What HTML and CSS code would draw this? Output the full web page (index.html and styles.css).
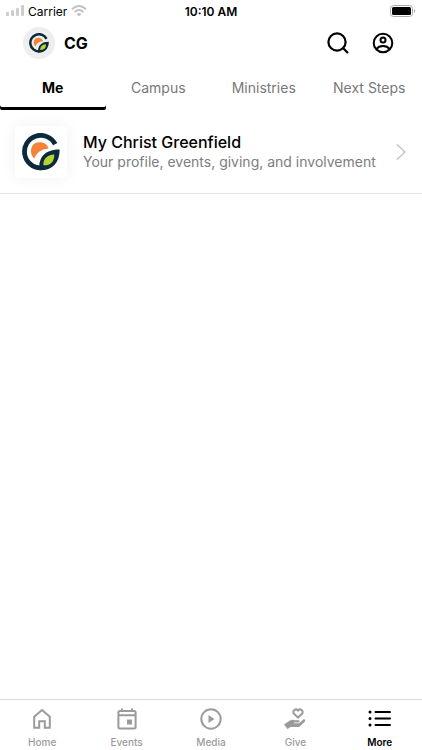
FILE: index.html
```html
<!DOCTYPE html>
<html lang="en">
<head>
<meta charset="utf-8">
<meta name="viewport" content="width=device-width, initial-scale=1">
<title>CG</title>
<link rel="stylesheet" href="styles.css">
</head>
<body>
<svg width="0" height="0" class="defs" aria-hidden="true">
  <symbol id="logo" viewBox="0 0 112 112">
    <path d="M98 33A48 48 0 1 0 56 103" fill="none" stroke="#0b2a3b" stroke-width="14"/>
    <path d="M36 75C20 60 24 27 52 27C66 27 76 35 78 46Q46 49 36 75Z" fill="#f5843a"/>
    <path d="M111 49C111 88 88 111 52 110C46 76 66 48 111 49Z" fill="#0b2a3b"/>
    <path d="M95 63C96 84 84 96 63 95C62 76 73 64 95 63Z" fill="#b4d335"/>
  </symbol>
</svg>
<div class="app">
  <div class="status">
    <div class="carrier">
      <svg width="18" height="12" viewBox="0 0 18 12" fill="#cdcdcd"><rect y="7" width="3" height="4" rx="1"/><rect x="5" y="5" width="3" height="6" rx="1"/><rect x="10" y="3" width="3" height="8" rx="1"/><rect x="15" width="3" height="11" rx="1"/></svg>
      <span>Carrier</span>
      <svg width="16" height="12" viewBox="0 0 16 12" fill="none" stroke="#c2c2c2" stroke-width="2"><path d="M1 4.200Q8-2.200 15 4.200M3.500 7Q8 3 12.500 7"/><path d="M5.500 9Q8 7 10.500 9L8 11.500Z" fill="#c2c2c2" stroke="none"/></svg>
    </div>
    <div class="time">10:10 AM</div>
    <svg class="battery" width="26" height="12" viewBox="0 0 26 12"><rect x=".5" y=".5" width="22" height="11" rx="3" fill="#fff" stroke="#aaa"/><rect x="2" y="2" width="19" height="8" rx="1.500"/><path d="M24 4q2 2 0 4z" fill="#999"/></svg>
  </div>
  <header class="header">
    <span class="avatar"><svg width="20" height="20"><use href="#logo"/></svg></span>
    <h1>CG</h1>
    <button type="button" aria-label="Search"><svg width="24" height="24" viewBox="0 0 24 24" fill="none" stroke="#000" stroke-width="2.200"><circle cx="11" cy="11" r="8.600"/><path d="M17 17l5 5"/></svg></button>
    <button type="button" aria-label="Account"><svg width="24" height="24" viewBox="0 0 24 24" fill="none" stroke="#000" stroke-width="2"><circle cx="12" cy="12" r="9.300"/><circle cx="12" cy="9" r="2.500"/><path d="M5.500 18Q7.500 15 12 15T18.500 18"/></svg></button>
  </header>
  <nav class="tabs" aria-label="Sections">
    <a href="#me" class="active" aria-current="page">Me</a>
    <a href="#campus">Campus</a>
    <a href="#ministries">Ministries</a>
    <a href="#next">Next Steps</a>
  </nav>
  <main>
    <a class="item" href="#profile">
      <span class="thumb"><svg width="38" height="38"><use href="#logo"/></svg></span>
      <span class="copy"><strong>My Christ Greenfield</strong><span>Your profile, events, giving, and involvement</span></span>
      <svg width="10" height="16" viewBox="0 0 10 16" fill="none" stroke="#c4c4c6" stroke-width="1.500"><path d="M1 .5L9 8l-8 7.500"/></svg>
    </a>
  </main>
  <nav class="bottom" aria-label="Main">
    <a href="#home"><svg width="24" height="24" viewBox="0 0 24 24" fill="none" stroke="currentColor" stroke-width="2"><path d="M4.200 20.700V9.700L12 3l7.800 6.700v11h-5v-6.500H9.200v6.500z"/></svg>Home</a>
    <a href="#events"><svg width="24" height="24" viewBox="0 0 24 24" fill="none" stroke="currentColor" stroke-width="2"><rect x="3.400" y="4" width="17.200" height="17.500" rx="1.500"/><path d="M3.400 8.300h17.200M7 1.500V5M17 1.500V5"/><path d="M12 12.500h5v5h-5z" fill="currentColor" stroke="none"/></svg>Events</a>
    <a href="#media"><svg width="24" height="24" viewBox="0 0 24 24" fill="none" stroke="currentColor" stroke-width="2"><circle cx="12" cy="12" r="9.700"/><path d="M9.500 8v8l6-4z" fill="currentColor" stroke="none"/></svg>Media</a>
    <a href="#give"><svg width="24" height="24" viewBox="0 0 24 24" fill="currentColor"><path d="M15 10.500L11 6.700C8.700 4.300 12.500.8 15 3.500C17.500.8 21.300 4.300 19 6.700Z" fill="none" stroke="currentColor" stroke-width="2"/><path d="M1.500 17l5.500-3.500c1.500-1 3-.7 4.500-.3h4c1.500 0 1.500 2 0 2.200h-4.500v.8h5l4-3.500c1.300-1 3 .3 2 1.700l-5 4.800c-.8.700-1.500.8-2.500.8H7.500L4.500 22 1 17.500z"/></svg>Give</a>
    <a href="#more" class="active" aria-current="page"><svg width="24" height="24" viewBox="0 0 24 24" fill="none" stroke="currentColor" stroke-width="2" stroke-linecap="round"><path d="M7.500 5H22M7.500 11.500H22M7.500 18H22"/><path d="M2 5h.01M2 11.500h.01M2 18h.01" stroke-width="3"/></svg>More</a>
  </nav>
</div>
</body>
</html>
```
FILE: styles.css
```css
* { box-sizing: border-box; }
body {
  margin: 0;
  font-family: Inter, "Liberation Sans", sans-serif;
  color: #000;
  background: #fff;
}
.defs { position: absolute; }
svg { display: block; flex: none; }
a { color: inherit; text-decoration: none; }
.app { min-height: 100vh; display: flex; flex-direction: column; }
.status {
  display: grid;
  grid-template-columns: 1fr auto 1fr;
  align-items: center;
  height: 22px;
  padding: 0 6px;
  font-size: 12px;
}
.carrier { display: flex; align-items: center; gap: 4px; }
.time { font-weight: 600; }
.battery { justify-self: end; }
.header {
  display: flex;
  align-items: center;
  height: 44px;
  padding: 0 27px 2px 23px;
}
.avatar {
  display: grid;
  place-items: center;
  width: 32px;
  height: 32px;
  border-radius: 50%;
  background: #eee;
}
h1 { flex: 1; margin: 0 0 0 9px; font-size: 16px; font-weight: 700; }
button {
  padding: 0;
  border: 0;
  background: none;
  margin-left: 21px;
}
.tabs {
  display: grid;
  grid-template-columns: repeat(4, 1fr);
  height: 44px;
  font-size: 14px;
  text-align: center;
  line-height: 44px;
  color: #77787a;
}
.tabs .active {
  color: #000;
  font-weight: 700;
  box-shadow: inset 0 -3px #000;
  border-radius: 2px;
}
main { flex: 1; }
.item {
  display: flex;
  align-items: center;
  padding: 16px 16px 15px 15px;
  border-bottom: 1px solid #e6e6e6;
}
.thumb {
  display: grid;
  place-items: center;
  width: 52px;
  height: 52px;
  border-radius: 3px;
  background: #fff;
  box-shadow: 0 0 16px rgba(0, 0, 0, 0.06);
}
.copy {
  flex: 1;
  display: flex;
  flex-direction: column;
  margin-left: 16px;
  font-size: 14px;
  line-height: 19px;
  color: #7d7d7f;
}
.copy strong { font-size: 16px; font-weight: 500; color: #000; }
.bottom {
  display: grid;
  grid-template-columns: repeat(5, 1fr);
  height: 51px;
  padding-top: 7px;
  border-top: 1px solid #dcdcdc;
  font-size: 10px;
  line-height: 14px;
  color: #9b9b9b;
}
.bottom a {
  display: flex;
  flex-direction: column;
  align-items: center;
  gap: 4px;
  font-weight: 500;
}
.bottom .active { color: #000; font-weight: 600; }
```
